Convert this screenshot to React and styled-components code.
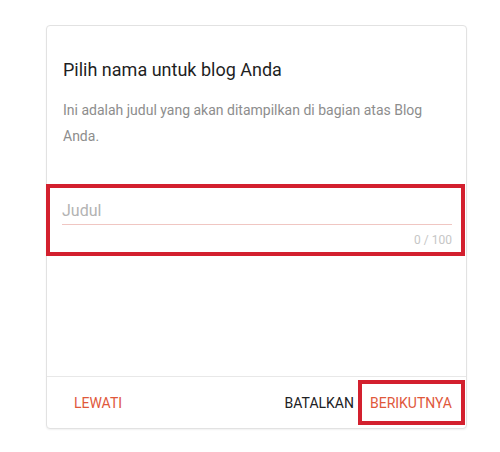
import React from 'react';
import styled, { createGlobalStyle } from 'styled-components';

const GlobalStyle = createGlobalStyle`
  html, body {
    margin: 0;
    padding: 0;
    background: #ffffff;
  }

  body {
    font-family: Roboto, "Liberation Sans", Arial, sans-serif;
  }
`;

const Page = styled.div`
  width: 500px;
  height: 452px;
  padding: 25px 0 0 46px;
  box-sizing: border-box;
`;

const Card = styled.div`
  display: flex;
  flex-direction: column;
  width: 421px;
  height: 404px;
  box-sizing: border-box;
  border: 1px solid #e2e2e2;
  border-radius: 4px;
  box-shadow: 0 1px 2px rgba(0, 0, 0, 0.06);
  background: #ffffff;
`;

const Body = styled.div`
  flex: 1;
  padding: 32px 16px 0;
`;

const Title = styled.h2`
  margin: 0;
  font-size: 18px;
  line-height: 24px;
  font-weight: 400;
  color: #1f1f1f;
`;

const Description = styled.p`
  margin: 15px 0 0;
  font-size: 14px;
  line-height: 26px;
  color: #8d8d8d;
`;

const FieldBox = styled.div`
  margin: 35px -15px 0 -17px;
  padding: 13px 9px 4px 12px;
  border: 4px solid #d3202e;
`;

const Input = styled.input`
  display: block;
  width: 100%;
  box-sizing: border-box;
  margin: 0;
  padding: 0 0 3px;
  border: none;
  border-bottom: 1px solid #f0c6c2;
  outline: none;
  background: transparent;
  font-family: inherit;
  font-size: 16px;
  line-height: 20px;
  color: #202124;

  &::placeholder {
    color: #b3b3b3;
  }
`;

const Counter = styled.div`
  margin-top: 7px;
  text-align: right;
  font-size: 12px;
  line-height: 16px;
  color: #c6c6c6;
`;

const Footer = styled.div`
  display: flex;
  align-items: center;
  height: 51px;
  padding: 0 1px 0 23px;
  border-top: 1px solid #e8e8e8;
`;

const Spacer = styled.div`
  flex: 1;
`;

const Button = styled.button`
  display: flex;
  align-items: center;
  height: ${({ highlighted }) => (highlighted ? '45px' : '37px')};
  box-sizing: border-box;
  padding: ${({ highlighted }) => (highlighted ? '0 9px 0 8px' : '0 4px')};
  border: ${({ highlighted }) => (highlighted ? '4px solid #d3202e' : 'none')};
  background: transparent;
  font-family: inherit;
  font-size: 14px;
  font-weight: 400;
  color: ${({ accent }) => (accent ? '#e0583b' : '#202124')};
  text-transform: uppercase;
  cursor: pointer;
`;

const App = () => (
  <>
    <GlobalStyle />
    <Page>
      <Card>
        <Body>
          <Title>Pilih nama untuk blog Anda</Title>
          <Description>
            Ini adalah judul yang akan ditampilkan di bagian atas Blog Anda.
          </Description>
          <FieldBox>
            <Input placeholder="Judul" maxLength={100} />
            <Counter>0 / 100</Counter>
          </FieldBox>
        </Body>
        <Footer>
          <Button accent>Lewati</Button>
          <Spacer />
          <Button>Batalkan</Button>
          <Button accent highlighted>Berikutnya</Button>
        </Footer>
      </Card>
    </Page>
  </>
);

export default App;
